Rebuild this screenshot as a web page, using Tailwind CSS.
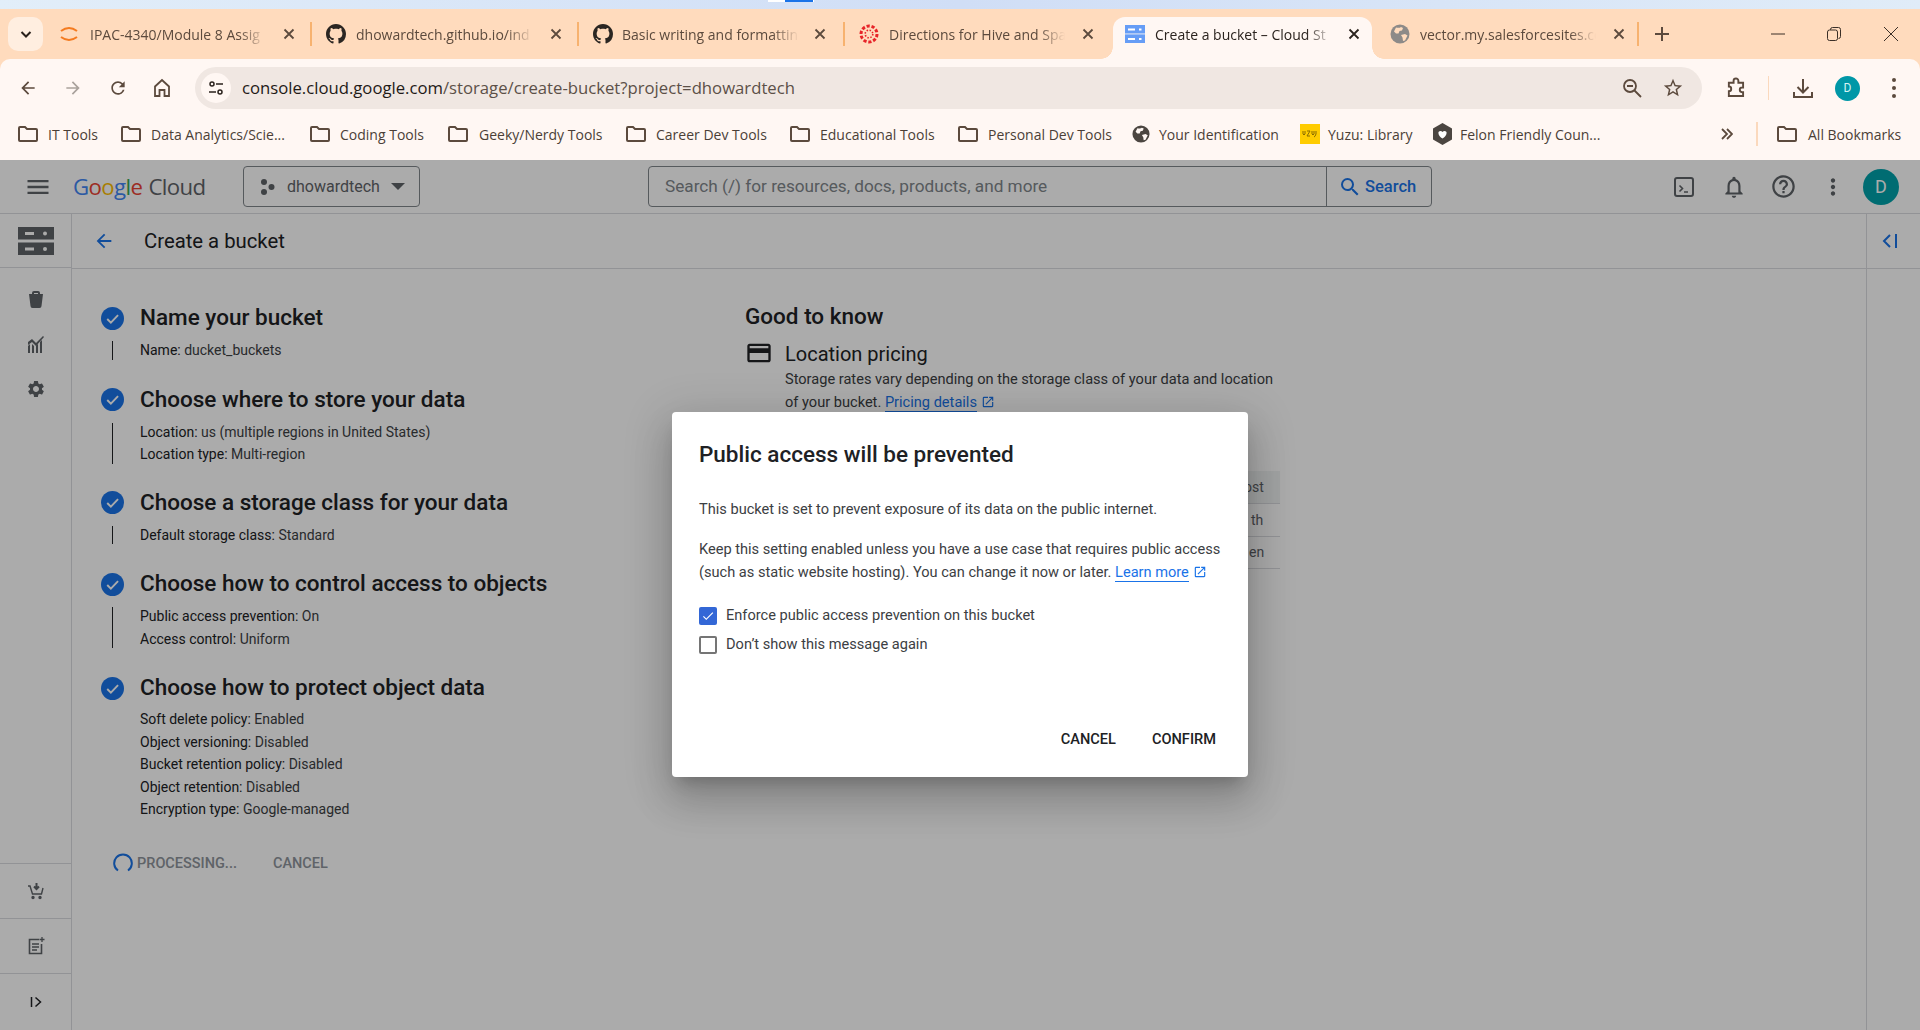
<!DOCTYPE html>
<html lang="en">
<head>
    <meta charset="UTF-8">
    <title>Create a bucket – Cloud Storage</title>
    <script src="https://cdn.jsdelivr.net/npm/@tailwindcss/browser@4"></script>
</head>
<body class="w-[1920px] h-[1030px] overflow-hidden flex flex-col bg-white font-['Roboto',sans-serif]">

    <!-- window behind -->
    <div class="h-[9px] relative bg-gradient-to-r from-[#e2eef9] via-[#d0def6] to-[#e0ecf8]">
        <div class="absolute left-[768px] top-0 w-[46px] h-[2px] bg-white"></div>
        <div class="absolute left-[785px] top-0 w-[28px] h-[2px] bg-[#1a73e8]"></div>
    </div>

    <!-- tab strip -->
    <div class="h-[50px] bg-[#ffdbbd] flex items-start font-['Open_Sans',sans-serif] text-[14px] text-[#5c4a3d]">
        <div class="ml-[8px] mt-[8px] w-[35px] h-[34px] rounded-[10px] bg-[#ffeee0] flex items-center justify-center">
            <svg class="w-[16px] h-[16px]" viewBox="0 0 16 16" fill="none" stroke="#2a211b" stroke-width="2"><path d="M3.5 6 8 10.5 12.500 6"/></svg>
        </div>
        <div class="ml-[2px] w-[267px] h-[34px] mt-[8px] flex items-center pl-[14px] relative">
            <svg class="w-[20px] h-[20px] shrink-0" viewBox="0 0 20 20" fill="none" stroke="#f47b20" stroke-width="2"><path d="M2 7Q10 1 18 7M2 13Q10 19 18 13"/></svg>
            <span class="ml-[11px] w-[176px] whitespace-nowrap overflow-hidden [mask-image:linear-gradient(to_right,black_85%,transparent)]">IPAC-4340/Module 8 Assig</span>
            <svg class="ml-[17px] w-[12px] h-[12px] shrink-0" viewBox="0 0 12 12" stroke="#5c4a3d" stroke-width="1.800"><path d="M1.500 1.500l9 9M10.500 1.500l-9 9"/></svg>
            <span class="absolute right-0 top-[5px] w-[2px] h-[24px] bg-[#f7b26f]"></span>
        </div>
        <div class="w-[267px] h-[34px] mt-[8px] flex items-center pl-[14px] relative">
            <svg class="w-[20px] h-[20px] shrink-0" viewBox="0 0 16 16" fill="#2b2622"><path d="M8 0C3.58 0 0 3.58 0 8c0 3.54 2.29 6.53 5.47 7.59.4.07.55-.17.55-.38 0-.19-.01-.82-.01-1.49-2.01.37-2.53-.49-2.69-.94-.09-.23-.48-.94-.82-1.13-.28-.15-.68-.52-.01-.53.63-.01 1.08.58 1.23.82.72 1.21 1.87.87 2.33.66.07-.52.28-.87.51-1.07-1.78-.2-3.64-.89-3.64-3.95 0-.87.31-1.59.82-2.15-.08-.2-.36-1.02.08-2.12 0 0 .67-.21 2.2.82.64-.18 1.32-.27 2-.27.68 0 1.36.09 2 .27 1.53-1.04 2.2-.82 2.2-.82.44 1.1.16 1.92.08 2.12.51.56.82 1.27.82 2.15 0 3.07-1.87 3.75-3.65 3.95.29.25.54.73.54 1.48 0 1.07-.01 1.93-.01 2.2 0 .21.15.46.55.38A8.013 8.013 0 0 0 16 8c0-4.42-3.58-8-8-8z"/></svg>
            <span class="ml-[10px] w-[177px] whitespace-nowrap overflow-hidden [mask-image:linear-gradient(to_right,black_85%,transparent)]">dhowardtech.github.io/ind</span>
            <svg class="ml-[17px] w-[12px] h-[12px] shrink-0" viewBox="0 0 12 12" stroke="#5c4a3d" stroke-width="1.800"><path d="M1.500 1.500l9 9M10.500 1.500l-9 9"/></svg>
            <span class="absolute right-0 top-[5px] w-[2px] h-[24px] bg-[#f7b26f]"></span>
        </div>
        <div class="w-[266px] h-[34px] mt-[8px] flex items-center pl-[14px] relative">
            <svg class="w-[20px] h-[20px] shrink-0" viewBox="0 0 16 16" fill="#2b2622"><path d="M8 0C3.58 0 0 3.58 0 8c0 3.54 2.29 6.53 5.47 7.59.4.07.55-.17.55-.38 0-.19-.01-.82-.01-1.49-2.01.37-2.53-.49-2.69-.94-.09-.23-.48-.94-.82-1.13-.28-.15-.68-.52-.01-.53.63-.01 1.08.58 1.23.82.72 1.21 1.87.87 2.33.66.07-.52.28-.87.51-1.07-1.78-.2-3.64-.89-3.64-3.95 0-.87.31-1.59.82-2.15-.08-.2-.36-1.02.08-2.12 0 0 .67-.21 2.2.82.64-.18 1.32-.27 2-.27.68 0 1.36.09 2 .27 1.53-1.04 2.2-.82 2.2-.82.44 1.1.16 1.92.08 2.12.51.56.82 1.27.82 2.15 0 3.07-1.87 3.75-3.65 3.95.29.25.54.73.54 1.48 0 1.07-.01 1.93-.01 2.2 0 .21.15.46.55.38A8.013 8.013 0 0 0 16 8c0-4.42-3.58-8-8-8z"/></svg>
            <span class="ml-[9px] w-[177px] whitespace-nowrap overflow-hidden [mask-image:linear-gradient(to_right,black_85%,transparent)]">Basic writing and formattin</span>
            <svg class="ml-[15px] w-[12px] h-[12px] shrink-0" viewBox="0 0 12 12" stroke="#5c4a3d" stroke-width="1.800"><path d="M1.500 1.500l9 9M10.500 1.500l-9 9"/></svg>
            <span class="absolute right-0 top-[5px] w-[2px] h-[24px] bg-[#f7b26f]"></span>
        </div>
        <div class="w-[268px] h-[34px] mt-[8px] flex items-center pl-[14px]">
            <svg class="w-[20px] h-[20px] shrink-0" viewBox="0 0 20 20" fill="none" stroke="#e72429"><circle cx="10" cy="10" r="8" stroke-width="3" stroke-dasharray="3.200 1.800"/><circle cx="10" cy="10" r="3.800" stroke-width="1.600" stroke-dasharray="1.500 1.500"/></svg>
            <span class="ml-[10px] w-[176px] whitespace-nowrap overflow-hidden [mask-image:linear-gradient(to_right,black_85%,transparent)]">Directions for Hive and Spa</span>
            <svg class="ml-[17px] w-[12px] h-[12px] shrink-0" viewBox="0 0 12 12" stroke="#5c4a3d" stroke-width="1.800"><path d="M1.500 1.500l9 9M10.500 1.500l-9 9"/></svg>
        </div>
        <!-- active tab -->
        <div class="relative w-[259px] h-[42px] mt-[8px] bg-[#fff7f3] rounded-t-[12px] flex items-center pl-[12px] pb-[8px] text-[#2b231e]">
            <span class="absolute left-[-12px] bottom-0 w-[12px] h-[12px] bg-[radial-gradient(circle_at_0_0,#ffdbbd_11.500px,#fff7f3_12px)]"></span>
            <span class="absolute right-[-12px] bottom-0 w-[12px] h-[12px] bg-[radial-gradient(circle_at_100%_0,#ffdbbd_11.500px,#fff7f3_12px)]"></span>
            <svg class="w-[20px] h-[20px] shrink-0" viewBox="0 0 20 20"><path fill="#aecbfa" d="M0 1h20v2H0zM0 10.500h20v2H0z"/><path fill="#669df6" d="M0 1h20v8.500H0zM0 10.500h20V19H0z"/><path fill="#fff" d="M3 4.500h7v2H3zM3 14h7v2H3zM14 4.500h2.500v2H14zM14 14h2.500v2H14z"/></svg>
            <span class="ml-[10px] w-[178px] whitespace-nowrap overflow-hidden [mask-image:linear-gradient(to_right,black_85%,transparent)]">Create a bucket – Cloud St</span>
            <svg class="ml-[15px] w-[12px] h-[12px] shrink-0" viewBox="0 0 12 12" stroke="#2b231e" stroke-width="1.800"><path d="M1.500 1.500l9 9M10.500 1.500l-9 9"/></svg>
        </div>
        <div class="w-[268px] h-[34px] mt-[8px] flex items-center pl-[18px] relative">
            <svg class="w-[20px] h-[20px] shrink-0" viewBox="0 0 20 20"><circle cx="10" cy="10" r="9.500" fill="#8d8a88"/><path fill="#ffdbbd" d="M6 3.500c2 .5 4 .5 5-.5l2 1-1 2.500-2.500.5-1 2.500H6L4 7.500zM11 11l4-1 2.500 1.500-2.500 5-2 .5-.5-3.500z"/></svg>
            <span class="ml-[10px] w-[176px] whitespace-nowrap overflow-hidden [mask-image:linear-gradient(to_right,black_85%,transparent)]">vector.my.salesforcesites.co</span>
            <svg class="ml-[17px] w-[12px] h-[12px] shrink-0" viewBox="0 0 12 12" stroke="#5c4a3d" stroke-width="1.800"><path d="M1.500 1.500l9 9M10.500 1.500l-9 9"/></svg>
            <span class="absolute right-[1px] top-[5px] w-[2px] h-[24px] bg-[#f7b26f]"></span>
        </div>
        <svg class="ml-[15px] mt-[18px] w-[14px] h-[14px] shrink-0" viewBox="0 0 14 14" stroke="#5c4a3d" stroke-width="2"><path d="M7 0v14M0 7h14"/></svg>
        <div class="ml-auto mt-[8px] h-[34px] flex items-center text-[#3b2f27]">
            <svg class="w-[14px] h-[14px]" viewBox="0 0 14 14" stroke="currentColor"><path d="M0 7h14"/></svg>
            <svg class="ml-[42px] w-[14px] h-[14px]" viewBox="0 0 14 14" fill="none" stroke="currentColor"><rect x=".5" y="3" width="10" height="10.500" rx="2"/><path d="M3.500 3V2.500a2 2 0 0 1 2-2h6a2 2 0 0 1 2 2v7a2 2 0 0 1-2 2"/></svg>
            <svg class="ml-[43px] mr-[22px] w-[14px] h-[14px]" viewBox="0 0 14 14" stroke="currentColor"><path d="M0 0l14 14M14 0L0 14"/></svg>
        </div>
    </div>

    <!-- toolbar -->
    <div class="h-[56px] bg-[#ffdbbd]">
        <div class="h-full pt-[2px] bg-[#fff7f3] rounded-t-[10px] flex items-center text-[#5c4a3d]">
            <svg class="ml-[18px] w-[20px] h-[20px]" viewBox="0 0 24 24" fill="currentColor"><path d="M20 11H7.830l5.590-5.590L12 4l-8 8 8 8 1.410-1.410L7.830 13H20v-2z"/></svg>
            <svg class="ml-[25px] w-[20px] h-[20px] text-[#aaa29c]" viewBox="0 0 24 24" fill="currentColor"><path d="M4 13h12.170l-5.590 5.590L12 20l8-8-8-8-1.410 1.410L16.170 11H4v2z"/></svg>
            <svg class="ml-[25px] w-[20px] h-[20px]" viewBox="0 0 24 24" fill="currentColor"><path d="M17.650 6.350A7.958 7.958 0 0 0 12 4c-4.420 0-7.990 3.580-7.990 8s3.570 8 7.990 8c3.730 0 6.840-2.550 7.730-6h-2.080A5.990 5.990 0 0 1 12 18c-3.310 0-6-2.690-6-6s2.690-6 6-6c1.660 0 3.140.690 4.220 1.780L13 11h7V4l-2.350 2.350z"/></svg>
            <svg class="ml-[24px] w-[20px] h-[20px]" viewBox="0 0 20 20" fill="none" stroke="currentColor" stroke-width="1.800"><path d="M3 8.500 10 2l7 6.500V18h-4.500v-6h-5v6H3z"/></svg>
            <div class="ml-[23px] w-[1507px] shrink-0 h-[42px] rounded-full bg-[#f0e7e2] flex items-center pl-[6px]">
                <div class="w-[30px] h-[30px] shrink-0 rounded-full bg-[#fff7f3] flex items-center justify-center">
                    <svg class="w-[16px] h-[16px]" viewBox="0 0 16 16" fill="none" stroke="#2b231e" stroke-width="1.500"><circle cx="4" cy="4" r="2"/><path d="M8 4h7M1 12h7"/><circle cx="12" cy="12" r="2"/></svg>
                </div>
                <span class="ml-[11px] w-[1379px] shrink-0 font-['Open_Sans',sans-serif] text-[16.700px] text-[#5c5048]"><span class="text-[#1f1a17]">console.cloud.google.com</span>/storage/create-bucket?project=dhowardtech</span>
                <svg class="w-[22px] h-[22px] shrink-0" viewBox="0 0 22 22" fill="none" stroke="currentColor" stroke-width="1.800"><circle cx="9" cy="9" r="6"/><path d="M6 9h6M13.500 13.500 20 20"/></svg>
                <svg class="ml-[19px] w-[22px] h-[22px] shrink-0" viewBox="0 0 24 24" fill="currentColor"><path d="M22 9.240l-7.190-.620L12 2 9.190 8.630 2 9.240l5.460 4.730L5.820 21 12 17.270 18.180 21l-1.630-7.030L22 9.240zM12 15.400l-3.760 2.270 1-4.280-3.320-2.880 4.380-.380L12 6.100l1.710 4.040 4.380.380-3.320 2.880 1 4.280L12 15.400z"/></svg>
            </div>
            <svg class="ml-[23px] w-[22px] h-[22px]" viewBox="0 0 22 22" fill="none" stroke="currentColor" stroke-width="2"><path d="M3 6h5V4a2.500 2.500 0 0 1 5 0v2h5v5h-1a2.500 2.500 0 0 0 0 5h1v4H3v-5a2.500 2.500 0 0 0 0-5z" transform="translate(1 0) scale(.95)"/></svg>
            <span class="ml-[21px] w-[1px] h-[24px] bg-[#fbd9bd]"></span>
            <svg class="ml-[23px] w-[22px] h-[22px]" viewBox="0 0 22 22" fill="none" stroke="currentColor" stroke-width="2"><path d="M11 2v13M5.500 10l5.500 5.500 5.500-5.500M2 15v5h18v-5"/></svg>
            <div class="ml-[21px] w-[25px] h-[25px] rounded-full bg-[#0097a7] text-[#d7f2f4] text-[12px] flex items-center justify-center">D</div>
            <svg class="ml-[31px] w-[6px] h-[22px]" viewBox="0 0 6 22" fill="currentColor"><circle cx="3" cy="3" r="2"/><circle cx="3" cy="11" r="2"/><circle cx="3" cy="19" r="2"/></svg>
        </div>
    </div>

    <!-- bookmarks -->
    <div class="h-[45px] pb-[7px] bg-[#fff7f3] flex items-center pl-[18px] font-['Open_Sans',sans-serif] text-[14px] text-[#4b3f37] whitespace-nowrap">
        <svg class="w-[20px] h-[18px]" viewBox="0 0 20 18" fill="none" stroke="#5c4a3d" stroke-width="2"><path d="M1 3a1 1 0 0 1 1-1h5l2 2h9a1 1 0 0 1 1 1v10a1 1 0 0 1-1 1H2a1 1 0 0 1-1-1z"/></svg>
        <span class="ml-[10px] w-[73px]">IT Tools</span>
        <svg class="w-[20px] h-[18px]" viewBox="0 0 20 18" fill="none" stroke="#5c4a3d" stroke-width="2"><path d="M1 3a1 1 0 0 1 1-1h5l2 2h9a1 1 0 0 1 1 1v10a1 1 0 0 1-1 1H2a1 1 0 0 1-1-1z"/></svg>
        <span class="ml-[10px] w-[159px]">Data Analytics/Scie...</span>
        <svg class="w-[20px] h-[18px]" viewBox="0 0 20 18" fill="none" stroke="#5c4a3d" stroke-width="2"><path d="M1 3a1 1 0 0 1 1-1h5l2 2h9a1 1 0 0 1 1 1v10a1 1 0 0 1-1 1H2a1 1 0 0 1-1-1z"/></svg>
        <span class="ml-[10px] w-[108px]">Coding Tools</span>
        <svg class="w-[20px] h-[18px]" viewBox="0 0 20 18" fill="none" stroke="#5c4a3d" stroke-width="2"><path d="M1 3a1 1 0 0 1 1-1h5l2 2h9a1 1 0 0 1 1 1v10a1 1 0 0 1-1 1H2a1 1 0 0 1-1-1z"/></svg>
        <span class="ml-[11px] w-[147px]">Geeky/Nerdy Tools</span>
        <svg class="w-[20px] h-[18px]" viewBox="0 0 20 18" fill="none" stroke="#5c4a3d" stroke-width="2"><path d="M1 3a1 1 0 0 1 1-1h5l2 2h9a1 1 0 0 1 1 1v10a1 1 0 0 1-1 1H2a1 1 0 0 1-1-1z"/></svg>
        <span class="ml-[10px] w-[134px]">Career Dev Tools</span>
        <svg class="w-[20px] h-[18px]" viewBox="0 0 20 18" fill="none" stroke="#5c4a3d" stroke-width="2"><path d="M1 3a1 1 0 0 1 1-1h5l2 2h9a1 1 0 0 1 1 1v10a1 1 0 0 1-1 1H2a1 1 0 0 1-1-1z"/></svg>
        <span class="ml-[10px] w-[138px]">Educational Tools</span>
        <svg class="w-[20px] h-[18px]" viewBox="0 0 20 18" fill="none" stroke="#5c4a3d" stroke-width="2"><path d="M1 3a1 1 0 0 1 1-1h5l2 2h9a1 1 0 0 1 1 1v10a1 1 0 0 1-1 1H2a1 1 0 0 1-1-1z"/></svg>
        <span class="ml-[10px] w-[144px]">Personal Dev Tools</span>
        <svg class="w-[18px] h-[18px]" viewBox="0 0 20 20"><circle cx="10" cy="10" r="9.500" fill="#4b4540"/><path fill="#fff7f3" d="M6 3.500c2 .5 4 .5 5-.5l2 1-1 2.500-2.500.5-1 2.500H6L4 7.500zM11 11l4-1 2.500 1.500-2.500 5-2 .5-.5-3.500z"/></svg>
        <span class="ml-[9px] w-[141px]">Your Identification</span>
        <div class="w-[20px] h-[20px] bg-[#ffcc00] flex items-center justify-center">
            <svg class="w-[16px] h-[8px]" viewBox="0 0 16 8" fill="none" stroke="#8a6d00"><path d="M1 1v3q1 2 2 0V1M5 1h3L5 6h3M10 1v3q1 2 2 0V1M14 1v3q-1 3-2 3"/></svg>
        </div>
        <span class="ml-[8px] w-[105px]">Yuzu: Library</span>
        <svg class="w-[19px] h-[22px]" viewBox="0 0 19 22"><path fill="#4b4540" d="M9.500 0 19 5.500v11L9.500 22 0 16.500v-11z"/><path fill="#fff" d="M5.500 9c1.500-1.500 3-1 4 0 1-1 2.500-1.500 4 0 .5 3-2 5.500-4 6.500-2-1-4.500-3.500-4-6.500z"/></svg>
        <span class="ml-[8px] w-[261px]">Felon Friendly Coun...</span>
        <svg class="w-[12px] h-[12px]" viewBox="0 0 12 12" fill="none" stroke="#5c4a3d" stroke-width="1.800"><path d="M1 1l5 5-5 5M6 1l5 5-5 5"/></svg>
        <span class="ml-[23px] w-[2px] h-[24px] bg-[#fbd9bd]"></span>
        <svg class="ml-[19px] w-[20px] h-[18px]" viewBox="0 0 20 18" fill="none" stroke="#5c4a3d" stroke-width="2"><path d="M1 3a1 1 0 0 1 1-1h5l2 2h9a1 1 0 0 1 1 1v10a1 1 0 0 1-1 1H2a1 1 0 0 1-1-1z"/></svg>
        <span class="ml-[11px]">All Bookmarks</span>
    </div>

    <!-- page -->
    <div class="relative flex-1 flex flex-col bg-white text-[#202124]">
        <!-- app bar -->
        <header class="h-[54px] shrink-0 border-b border-[#dadce0] flex items-center">
            <svg class="ml-[24px] w-[28px] h-[28px] text-[#5f6368]" viewBox="0 0 24 24" fill="currentColor"><path d="M3 18h18v-2H3v2zm0-5h18v-2H3v2zm0-7v2h18V6H3z"/></svg>
            <div class="ml-[21px] w-[170px] text-[22.200px] tracking-[-0.6px] font-['Open_Sans',sans-serif] whitespace-nowrap"><span class="text-[#4285f4]">G</span><span class="text-[#ea4335]">o</span><span class="text-[#fbbc04]">o</span><span class="text-[#4285f4]">g</span><span class="text-[#34a853]">l</span><span class="text-[#ea4335]">e</span><span class="ml-[6px] text-[#5f6368]">Cloud</span></div>
            <div class="h-[41px] w-[177px] border border-[#80868b] rounded-[4px] flex items-center">
                <svg class="ml-[15px] w-[18px] h-[18px] text-[#5f6368]" viewBox="0 0 18 18" fill="currentColor"><circle cx="5" cy="4" r="3"/><circle cx="12.500" cy="9" r="3"/><circle cx="5" cy="14" r="3"/></svg>
                <span class="ml-[10px] text-[16px] text-[#5f6368]">dhowardtech</span>
                <span class="ml-[11px] w-0 h-0 border-x-[7px] border-x-transparent border-t-[7px] border-t-[#5f6368]"></span>
            </div>
            <div class="ml-[228px] w-[784px] h-[41px] border border-[#80868b] rounded-[4px] flex items-center">
                <span class="pl-[16px] flex-1 text-[17.200px] text-[#80868b]">Search (/) for resources, docs, products, and more</span>
                <div class="w-[105px] h-full border-l border-[#80868b] flex items-center pl-[11px] text-[#1a73e8]">
                    <svg class="w-[24px] h-[24px]" viewBox="0 0 24 24" fill="currentColor"><path d="M15.500 14h-.790l-.280-.270A6.471 6.471 0 0 0 16 9.500 6.500 6.500 0 1 0 9.500 16c1.610 0 3.090-.590 4.230-1.570l.270.280v.790l5 4.990L20.490 19l-4.990-5zm-6 0C7.010 14 5 11.990 5 9.500S7.010 5 9.500 5 14 7.010 14 9.500 11.990 14 9.500 14z"/></svg>
                    <span class="ml-[3px] pt-[1px] text-[16.500px] font-medium">Search</span>
                </div>
            </div>
            <svg class="ml-[240px] w-[24px] h-[24px] text-[#5f6368]" viewBox="0 0 24 24" fill="none" stroke="currentColor" stroke-width="2"><rect x="3" y="3" width="18" height="18" rx="2"/><path d="M7.500 10.500l3 3-3 3M12 17h4" stroke-width="1.600"/></svg>
            <svg class="ml-[25px] w-[26px] h-[26px] text-[#5f6368]" viewBox="0 0 24 24" fill="currentColor"><path d="M12 22c1.100 0 2-.9 2-2h-4c0 1.100.9 2 2 2zm6-6v-5c0-3.070-1.630-5.640-4.500-6.320V4c0-.83-.67-1.500-1.500-1.500s-1.500.67-1.500 1.500v.68C7.640 5.360 6 7.920 6 11v5l-2 2v1h16v-1l-2-2zm-2 1H8v-6c0-2.480 1.510-4.500 4-4.500s4 2.020 4 4.500v6z"/></svg>
            <svg class="ml-[23px] w-[27px] h-[27px] text-[#5f6368]" viewBox="0 0 24 24" fill="currentColor"><path d="M11 18h2v-2h-2v2zm1-16C6.480 2 2 6.480 2 12s4.480 10 10 10 10-4.480 10-10S17.520 2 12 2zm0 18c-4.410 0-8-3.590-8-8s3.590-8 8-8 8 3.590 8 8-3.590 8-8 8zm0-14c-2.210 0-4 1.790-4 4h2c0-1.100.9-2 2-2s2 .9 2 2c0 2-3 1.750-3 5h2c0-2.250 3-2.500 3-5 0-2.210-1.790-4-4-4z"/></svg>
            <svg class="ml-[23px] w-[26px] h-[26px] text-[#5f6368]" viewBox="0 0 24 24" fill="currentColor"><path d="M12 8c1.100 0 2-.9 2-2s-.9-2-2-2-2 .9-2 2 .9 2 2 2zm0 2c-1.100 0-2 .9-2 2s.9 2 2 2 2-.9 2-2-.9-2-2-2zm0 6c-1.100 0-2 .9-2 2s.9 2 2 2 2-.9 2-2-.9-2-2-2z"/></svg>
            <div class="ml-[17px] w-[36px] h-[36px] rounded-full bg-[#00a2ab] text-white text-[18px] flex items-center justify-center">D</div>
        </header>

        <div class="flex-1 flex min-h-0">
            <!-- nav rail -->
            <nav class="w-[72px] shrink-0 border-r border-[#dadce0] flex flex-col text-[#5f6368]">
                <div class="h-[54px] flex items-center justify-center border-b border-[#dadce0]">
                    <svg class="w-[36px] h-[28px]" viewBox="0 0 36 28"><path fill="#5f6368" d="M0 0h36v12.500H0zM0 15.500h36V28H0z"/><path fill="#fff" d="M7 5h9v3H7zM7 20.500h9v3H7z"/><circle cx="27" cy="6.500" r="2" fill="#fff"/><circle cx="27" cy="22" r="2" fill="#fff"/></svg>
                </div>
                <svg class="mt-[22px] mx-auto w-[16px] h-[18px]" viewBox="0 0 16 18" fill="currentColor"><path d="M4 4V3a2 2 0 0 1 2-2h4a2 2 0 0 1 2 2v1h3l-1.500 12a2 2 0 0 1-2 2h-7a2 2 0 0 1-2-2L1 4zm2 0h4V3H6z"/></svg>
                <svg class="mt-[27px] mx-auto w-[18px] h-[18px]" viewBox="0 0 18 18" fill="currentColor"><path d="M1 18v-7l2-2v9zM5 18V9l2 2v7zM9 18v-7l2-2v9zM13 18V7l2-2v13zM1 7l4-3 4 4 7-7 1 1-8 9-4-4-4 3z"/></svg>
                <svg class="mt-[26px] mx-auto w-[20px] h-[20px]" viewBox="0 0 24 24" fill="currentColor"><path d="M19.140 12.940c.04-.3.06-.61.06-.94 0-.32-.02-.64-.07-.94l2.030-1.580a.49.49 0 0 0 .12-.61l-1.920-3.320a.488.488 0 0 0-.59-.22l-2.390.96c-.5-.38-1.030-.7-1.620-.94l-.36-2.540a.484.484 0 0 0-.48-.41h-3.840c-.24 0-.43.17-.47.41l-.36 2.540c-.59.24-1.130.57-1.620.94l-2.390-.96c-.22-.08-.47 0-.59.22L2.740 8.870c-.12.21-.08.47.12.61l2.030 1.580c-.05.3-.09.63-.09.94s.02.64.07.94l-2.030 1.580a.49.49 0 0 0-.12.61l1.920 3.320c.12.22.37.29.59.22l2.390-.96c.5.38 1.030.7 1.620.94l.36 2.540c.05.24.24.41.48.41h3.840c.24 0 .44-.17.47-.41l.36-2.540c.59-.24 1.130-.56 1.620-.94l2.390.96c.22.08.47 0 .59-.22l1.920-3.320c.12-.22.07-.47-.12-.61l-2.010-1.580zM12 15.600c-1.980 0-3.600-1.620-3.600-3.600s1.620-3.600 3.600-3.600 3.600 1.620 3.600 3.600-1.620 3.600-3.600 3.600z"/></svg>
                <div class="mt-auto h-[55px] border-t border-[#dadce0] flex items-center justify-center">
                    <svg class="w-[18px] h-[18px]" viewBox="0 0 18 18" fill="none" stroke="currentColor" stroke-width="1.400"><path d="M1 4h2l2.500 8h9L16 6"/><circle cx="6" cy="15.500" r="1" fill="currentColor"/><circle cx="13" cy="15.500" r="1" fill="currentColor"/><path d="M9.500 1v6M7 4.500l2.500 2.500L12 4.500" stroke-width="2"/></svg>
                </div>
                <div class="h-[55px] border-t border-[#dadce0] flex items-center justify-center">
                    <svg class="w-[18px] h-[18px]" viewBox="0 0 18 18" fill="none" stroke="currentColor" stroke-width="1.600"><path d="M12 2.500H2.500v14h12V7"/><path d="M5 7h7M5 10h7M5 13h5M15 0v5M12.500 2.500h5" stroke-width="1.300"/></svg>
                </div>
                <div class="h-[57px] border-t border-[#dadce0] flex items-center justify-center">
                    <svg class="w-[12px] h-[12px]" viewBox="0 0 12 12" fill="none" stroke="#202124" stroke-width="1.500"><path d="M1.500 1v10M5.500 1.500l5 4.500-5 4.500"/></svg>
                </div>
            </nav>

            <!-- main -->
            <main class="flex-1 min-w-0 flex flex-col">
                <div class="h-[55px] shrink-0 border-b border-[#dadce0] flex items-center">
                    <svg class="ml-[21px] w-[22px] h-[22px] text-[#1a73e8]" viewBox="0 0 24 24" fill="currentColor"><path d="M20 11H7.830l5.590-5.590L12 4l-8 8 8 8 1.410-1.410L7.830 13H20v-2z"/></svg>
                    <h1 class="ml-[29px] text-[20.300px]">Create a bucket</h1>
                </div>
                <div class="flex-1 flex">
                    <!-- steps -->
                    <div class="w-[673px] shrink-0 pl-[29px] pt-[35px]">
                        <div class="flex items-center h-[28px]">
                            <svg class="w-[23px] h-[23px]" viewBox="0 0 24 24"><circle cx="12" cy="12" r="12" fill="#1a73e8"/><path d="M6.500 12.500l3.800 3.800 7.500-7.800" fill="none" stroke="#fff" stroke-width="2"/></svg>
                            <h2 class="ml-[16px] text-[22.500px] font-medium">Name your bucket</h2>
                        </div>
                        <div class="mt-[7px] mb-[24px] ml-[11px] pl-[28px] relative text-[14px] leading-[22.500px] text-[#3c4043]">
                            <span class="absolute left-0 top-[2px] bottom-[2px] w-[1px] bg-[#202124]"></span>
                            <div><span class="text-[#202124]">Name:</span> ducket_buckets</div>
                        </div>
                        <div class="flex items-center h-[28px]">
                            <svg class="w-[23px] h-[23px]" viewBox="0 0 24 24"><circle cx="12" cy="12" r="12" fill="#1a73e8"/><path d="M6.500 12.500l3.800 3.800 7.500-7.800" fill="none" stroke="#fff" stroke-width="2"/></svg>
                            <h2 class="ml-[16px] text-[22.500px] font-medium">Choose where to store your data</h2>
                        </div>
                        <div class="mt-[7px] mb-[23px] ml-[11px] pl-[28px] relative text-[14px] leading-[22.500px] text-[#3c4043]">
                            <span class="absolute left-0 top-[2px] bottom-[2px] w-[1px] bg-[#202124]"></span>
                            <div><span class="text-[#202124]">Location:</span> us (multiple regions in United States)</div>
                            <div><span class="text-[#202124]">Location type:</span> Multi-region</div>
                        </div>
                        <div class="flex items-center h-[28px]">
                            <svg class="w-[23px] h-[23px]" viewBox="0 0 24 24"><circle cx="12" cy="12" r="12" fill="#1a73e8"/><path d="M6.500 12.500l3.800 3.800 7.500-7.800" fill="none" stroke="#fff" stroke-width="2"/></svg>
                            <h2 class="ml-[16px] text-[22.500px] font-medium">Choose a storage class for your data</h2>
                        </div>
                        <div class="mt-[7px] mb-[24px] ml-[11px] pl-[28px] relative text-[14px] leading-[22.500px] text-[#3c4043]">
                            <span class="absolute left-0 top-[2px] bottom-[2px] w-[1px] bg-[#202124]"></span>
                            <div><span class="text-[#202124]">Default storage class:</span> Standard</div>
                        </div>
                        <div class="flex items-center h-[28px]">
                            <svg class="w-[23px] h-[23px]" viewBox="0 0 24 24"><circle cx="12" cy="12" r="12" fill="#1a73e8"/><path d="M6.500 12.500l3.800 3.800 7.500-7.800" fill="none" stroke="#fff" stroke-width="2"/></svg>
                            <h2 class="ml-[16px] text-[22.500px] font-medium">Choose how to control access to objects</h2>
                        </div>
                        <div class="mt-[7px] mb-[24px] ml-[11px] pl-[28px] relative text-[14px] leading-[22.500px] text-[#3c4043]">
                            <span class="absolute left-0 top-[2px] bottom-[2px] w-[1px] bg-[#202124]"></span>
                            <div><span class="text-[#202124]">Public access prevention:</span> On</div>
                            <div><span class="text-[#202124]">Access control:</span> Uniform</div>
                        </div>
                        <div class="flex items-center h-[28px]">
                            <svg class="w-[23px] h-[23px]" viewBox="0 0 24 24"><circle cx="12" cy="12" r="12" fill="#1a73e8"/><path d="M6.500 12.500l3.800 3.800 7.500-7.800" fill="none" stroke="#fff" stroke-width="2"/></svg>
                            <h2 class="ml-[16px] text-[22.500px] font-medium">Choose how to protect object data</h2>
                        </div>
                        <div class="mt-[6px] ml-[11px] pl-[28px] text-[14px] leading-[22.500px] text-[#3c4043]">
                            <div><span class="text-[#202124]">Soft delete policy:</span> Enabled</div>
                            <div><span class="text-[#202124]">Object versioning:</span> Disabled</div>
                            <div><span class="text-[#202124]">Bucket retention policy:</span> Disabled</div>
                            <div><span class="text-[#202124]">Object retention:</span> Disabled</div>
                            <div><span class="text-[#202124]">Encryption type:</span> Google-managed</div>
                        </div>
                        <div class="mt-[32px] ml-[12px] flex items-center text-[14.500px] font-medium text-[#8e949b]">
                            <svg class="w-[20px] h-[20px]" viewBox="0 0 20 20" fill="none" stroke="#1a73e8" stroke-width="2"><path d="M5 17.500A8.800 8.800 0 1 1 15 17.500"/></svg>
                            <span class="ml-[4px]">PROCESSING...</span>
                            <span class="ml-[36px]">CANCEL</span>
                        </div>
                    </div>
                    <!-- good to know -->
                    <div class="w-[535px] shrink-0 pt-[32px]">
                        <h2 class="text-[22.500px] font-medium leading-[30px]">Good to know</h2>
                        <div class="mt-[9px] flex">
                            <svg class="w-[28px] h-[28px] shrink-0 -mt-[1px]" viewBox="0 0 24 24" fill="#202124"><path d="M20 4H4c-1.110 0-1.990.89-1.990 2L2 18c0 1.110.89 2 2 2h16c1.110 0 2-.89 2-2V6c0-1.110-.89-2-2-2zm0 14H4v-6h16v6zm0-10H4V6h16v2z"/></svg>
                            <div class="ml-[12px]">
                                <h3 class="text-[20px] leading-[28px]">Location pricing</h3>
                                <p class="text-[14.600px] leading-[23px] text-[#3c4043]">Storage rates vary depending on the storage class of your data and location of your bucket. <a class="text-[#1a73e8] border-b border-[#1a73e8]">Pricing details</a> <svg class="inline w-[14px] h-[14px] -mt-[2px] text-[#1a73e8]" viewBox="0 0 24 24" fill="currentColor"><path d="M19 19H5V5h7V3H5a2 2 0 0 0-2 2v14a2 2 0 0 0 2 2h14c1.100 0 2-.9 2-2v-7h-2v7zM14 3v2h3.590l-9.830 9.830 1.410 1.410L19 6.410V10h2V3h-7z"/></svg></p>
                            </div>
                        </div>
                        <div class="mt-[57px] text-[14px] text-[#5f6368]">
                            <div class="h-[33px] bg-[#f1f3f4] border-b border-[#dadce0] flex items-center pl-[499px]">ost</div>
                            <div class="h-[33px] border-b border-[#dadce0] flex items-center pl-[506px]">th</div>
                            <div class="h-[32px] border-b border-[#dadce0] flex items-center pl-[504px]">en</div>
                        </div>
                    </div>
                </div>
            </main>

            <!-- right rail -->
            <aside class="w-[54px] shrink-0 border-l border-[#dadce0]">
                <div class="h-[55px] pr-[7px] border-b border-[#dadce0] flex items-center justify-center">
                    <svg class="w-[16px] h-[16px]" viewBox="0 0 16 16" fill="none" stroke="#1a73e8" stroke-width="2"><path d="M8 2 2 8l6 6M14 1v14"/></svg>
                </div>
            </aside>
        </div>

        <!-- dialog -->
        <div class="absolute inset-0 bg-black/[0.33] flex items-center justify-center">
            <div class="mb-[2px] w-[576px] h-[365px] bg-white rounded-[4px] shadow-[0_11px_15px_-7px_rgba(0,0,0,0.2),0_24px_38px_3px_rgba(0,0,0,0.14),0_9px_46px_8px_rgba(0,0,0,0.12)] px-[27px] pt-[27px] flex flex-col text-[#3c4043] text-[14.600px]">
                <h2 class="text-[22.500px] font-medium leading-[30px] text-[#202124]">Public access will be prevented</h2>
                <p class="mt-[29px] leading-[23px]">This bucket is set to prevent exposure of its data on the public internet.</p>
                <p class="mt-[17px] leading-[23px]">Keep this setting enabled unless you have a use case that requires public access (such as static website hosting). You can change it now or later. <a class="text-[#1a73e8] border-b border-[#1a73e8]">Learn more</a> <svg class="inline w-[14px] h-[14px] -mt-[2px] text-[#1a73e8]" viewBox="0 0 24 24" fill="currentColor"><path d="M19 19H5V5h7V3H5a2 2 0 0 0-2 2v14a2 2 0 0 0 2 2h14c1.100 0 2-.9 2-2v-7h-2v7zM14 3v2h3.590l-9.830 9.830 1.410 1.410L19 6.410V10h2V3h-7z"/></svg></p>
                <label class="mt-[20px] h-[24px] flex items-center">
                    <span class="w-[18px] h-[18px] rounded-[2px] bg-[#3367d6] flex items-center justify-center">
                        <svg class="w-[14px] h-[14px]" viewBox="0 0 24 24" fill="#fff"><path d="M9 16.170 4.830 12l-1.420 1.410L9 19 21 7l-1.410-1.410z"/></svg>
                    </span>
                    <span class="ml-[9px]">Enforce public access prevention on this bucket</span>
                </label>
                <label class="mt-[5px] h-[24px] flex items-center">
                    <span class="w-[18px] h-[18px] rounded-[2px] border-2 border-[#757575]"></span>
                    <span class="ml-[9px]">Don’t show this message again</span>
                </label>
                <div class="mt-auto mb-[26px] flex justify-end pr-[5px] text-[14.600px] font-medium text-[#202124]">
                    <span>CANCEL</span>
                    <span class="ml-[36px]">CONFIRM</span>
                </div>
            </div>
        </div>
    </div>
</body>
</html>
